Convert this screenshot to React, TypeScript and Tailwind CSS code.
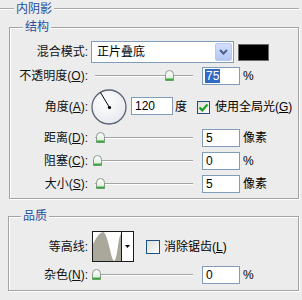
import React from "react";

const font = "font-['Liberation_Sans','Noto_Sans_CJK_SC',sans-serif]";

function Lbl({ name, k }: { name: string; k?: string }) {
  return (
    <div className="w-[78px] shrink-0 text-right text-[12px] leading-[14px] text-[#111]">
      {name}
      {k && (
        <>
          (<span className="underline underline-offset-1">{k}</span>)
        </>
      )}
      :
    </div>
  );
}

function Thumb() {
  return (
    <svg width="9" height="11" viewBox="0 0 9 11">
      <defs>
        <linearGradient id="tg" x1="0" y1="0" x2="0" y2="1">
          <stop offset="0" stopColor="#ffffff" />
          <stop offset="1" stopColor="#d9ead6" />
        </linearGradient>
      </defs>
      <path d="M0.5 4.5 Q0.5 0.5 4.5 0.5 Q8.5 0.5 8.5 4.5 V10.5 H0.5 Z" fill="url(#tg)" stroke="#8b9a8d" />
      <path d="M0.5 9.5 H8.5" stroke="#3fa63f" strokeWidth="2" />
    </svg>
  );
}

function Slider({ thumb }: { thumb: number }) {
  return (
    <div className="relative ml-[3px] flex h-[18px] w-[108px] shrink-0 items-center">
      <div className="ml-[4px] h-[2px] w-[98px] border-t border-b border-t-[#a3a3a3] border-b-white" />
      <div className="absolute top-[3px]" style={{ left: thumb }}>
        <Thumb />
      </div>
    </div>
  );
}

function Field({ value, selected, w = 38 }: { value: string; selected?: boolean; w?: number }) {
  return (
    <div
      className="flex h-[18px] shrink-0 items-center border border-[#7f9db9] bg-white pl-[2px] text-[12px] leading-[14px] text-black"
      style={{ width: w }}
    >
      {selected ? <span className="bg-[#316ac5] px-[1px] text-white">{value}</span> : <span className="px-[1px]">{value}</span>}
    </div>
  );
}

const rows = [
  { name: "距离", k: "D", value: "5", unit: "像素", thumb: 5 },
  { name: "阻塞", k: "C", value: "0", unit: "%", thumb: 2 },
  { name: "大小", k: "S", value: "5", unit: "像素", thumb: 5 },
];

function Dial() {
  return (
    <svg width="36" height="36" viewBox="0 0 36 36" className="ml-[3px] shrink-0">
      <defs>
        <radialGradient id="dg" cx="0.4" cy="0.35" r="0.7">
          <stop offset="0" stopColor="#ffffff" />
          <stop offset="1" stopColor="#e6e8ee" />
        </radialGradient>
      </defs>
      <circle cx="18" cy="18" r="17" fill="url(#dg)" stroke="#5a6274" strokeWidth="1.3" />
      <line x1="18.5" y1="18.5" x2="9.5" y2="3.5" stroke="#000" strokeWidth="1" />
      <circle cx="18.5" cy="18.5" r="1.6" fill="#000" />
    </svg>
  );
}

export default function App() {
  return (
    <div className={`${font} h-[300px] w-[302px] overflow-hidden bg-[#ececec] pr-[3px]`}>
      {/* 内阴影 */}
      <div className="flex h-[18px] items-center">
        <div className="h-[2px] w-[14px] border-t border-b border-t-[#a9a9a9] border-b-white" />
        <span className="px-[2px] text-[12px] leading-[14px] text-[#1f4f9e]">内阴影</span>
        <div className="h-[2px] flex-1 border-t border-b border-t-[#a9a9a9] border-b-white" />
      </div>

      {/* 结构 */}
      <div className="relative ml-[9px] mt-[9px] border border-[#a3a3a3] pb-[5px] shadow-[inset_1px_1px_0_#fff,1px_1px_0_#fff]">
        <span className="absolute left-[13px] top-[-8px] bg-[#ececec] px-[2px] text-[12px] leading-[14px] text-[#1f4f9e]">结构</span>

        <div className="mt-[13px] flex h-[22px] items-center">
          <Lbl name="混合模式" />
          <div className="ml-[3px] flex h-[22px] w-[143px] shrink-0 items-center border border-[#7f9db9] bg-white">
            <span className="flex-1 pl-[5px] text-[12px] leading-[14px] text-black">正片叠底</span>
            <div className="mr-[1px] flex h-[18px] w-[17px] items-center justify-center rounded-[2px] border border-[#b7c9f2] bg-gradient-to-b from-[#d3e0fc] to-[#b3c6f4]">
              <svg width="9" height="6" viewBox="0 0 9 6">
                <path d="M1 1 L4.5 4.5 L8 1" fill="none" stroke="#4d6185" strokeWidth="2" />
              </svg>
            </div>
          </div>
          <div className="ml-[4px] h-[17px] w-[31px] border border-[#6a6a6a] bg-black" />
        </div>

        <div className="mt-[4px] flex h-[18px] items-center">
          <Lbl name="不透明度" k="O" />
          <Slider thumb={74} />
          <div className="ml-[3px]">
            <Field value="75" selected />
          </div>
          <span className="ml-[3px] text-[12px] leading-[14px] text-black">%</span>
        </div>

        <div className="mt-[4px] flex h-[36px] items-center">
          <Lbl name="角度" k="A" />
          <Dial />
          <div className="ml-[4px] mt-[-2px]">
            <Field value="120" w={42} />
          </div>
          <span className="ml-[2px] text-[12px] leading-[14px] text-black">度</span>
          <div className="ml-[10px] flex h-[13px] w-[13px] items-center justify-center border border-[#1c5180] bg-gradient-to-br from-[#dcdcd7] to-white">
            <svg width="11" height="11" viewBox="0 0 11 11">
              <path d="M1.5 5.5 L4.3 8.3 L9.5 2.5" fill="none" stroke="#21a121" strokeWidth="2.2" />
            </svg>
          </div>
          <span className="ml-[5px] text-[12px] leading-[14px] text-black">
            使用全局光(<span className="underline underline-offset-1">G</span>)
          </span>
        </div>

        {rows.map((r, i) => (
          <div key={r.k} className={`flex h-[18px] items-center ${i === 0 ? "mt-[4px]" : "mt-[5px]"}`}>
            <Lbl name={r.name} k={r.k} />
            <Slider thumb={r.thumb} />
            <div className="ml-[3px]">
              <Field value={r.value} />
            </div>
            <span className="ml-[3px] text-[12px] leading-[14px] text-black">{r.unit}</span>
          </div>
        ))}
      </div>

      {/* 品质 */}
      <div className="relative ml-[8px] mt-[17px] border border-[#a3a3a3] pb-[6px] shadow-[inset_1px_1px_0_#fff,1px_1px_0_#fff]">
        <span className="absolute left-[12px] top-[-8px] bg-[#ececec] px-[2px] text-[12px] leading-[14px] text-[#1f4f9e]">品质</span>

        <div className="mt-[14px] flex h-[31px] items-center">
          <div className="w-[79px] shrink-0 text-right text-[12px] leading-[14px] text-[#111]">等高线:</div>
          <div className="ml-[4px] flex h-[31px] w-[42px] shrink-0 border border-[#1a1a1a] bg-white">
            <svg width="28" height="29" viewBox="0 0 28 29" className="shrink-0">
              <path d="M0 12 Q6 0 10 0 Q13 0 17 18 Q19.5 29 21 29 Q23 29 25 14 Q26.5 3 28 2 V29 H0 Z" fill="#a9a89a" />
            </svg>
            <div className="w-px bg-[#1a1a1a]" />
            <div className="flex flex-1 items-center justify-center">
              <svg width="5" height="3" viewBox="0 0 5 3">
                <path d="M0 0 H5 L2.5 3 Z" fill="#000" />
              </svg>
            </div>
          </div>
          <div className="ml-[12px] h-[14px] w-[14px] border border-[#1c5180] bg-gradient-to-br from-[#dcdcd7] to-white" />
          <span className="ml-[4px] text-[12px] leading-[14px] text-black">
            消除锯齿(<span className="underline underline-offset-1">L</span>)
          </span>
        </div>

        <div className="mt-[4px] flex h-[18px] items-center">
          <div className="w-[79px] shrink-0 text-right text-[12px] leading-[14px] text-[#111]">
            杂色(<span className="underline underline-offset-1">N</span>):
          </div>
          <Slider thumb={1} />
          <div className="ml-[3px]">
            <Field value="0" />
          </div>
          <span className="ml-[3px] text-[12px] leading-[14px] text-black">%</span>
        </div>
      </div>
    </div>
  );
}
